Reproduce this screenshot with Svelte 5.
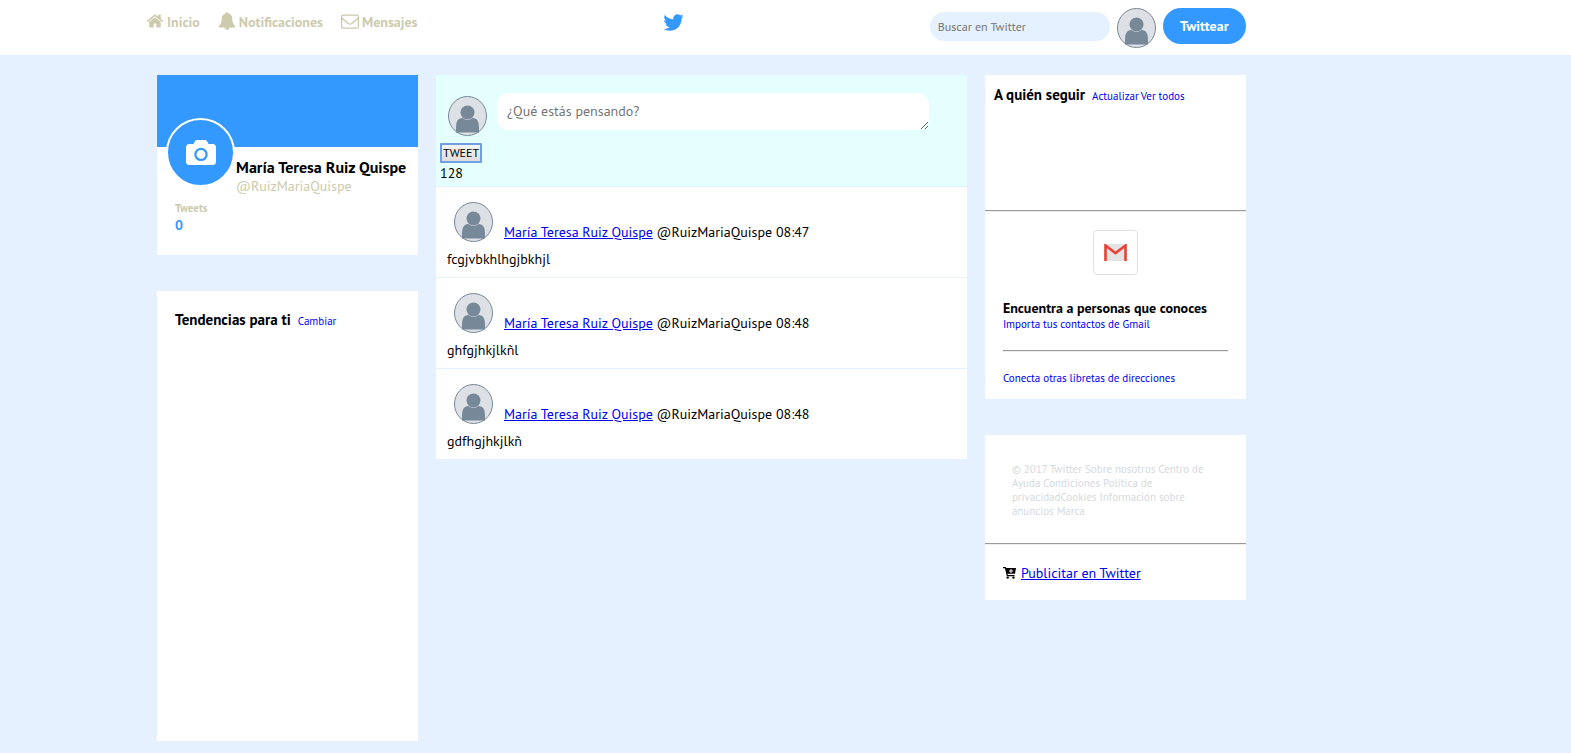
<script>
  const tweets = [
    { name: 'María Teresa Ruiz Quispe', user: '@RuizMariaQuispe', time: '08:47', text: 'fcgjvbkhlhgjbkhjl' },
    { name: 'María Teresa Ruiz Quispe', user: '@RuizMariaQuispe', time: '08:48', text: 'ghfgjhkjlkñl' },
    { name: 'María Teresa Ruiz Quispe', user: '@RuizMariaQuispe', time: '08:48', text: 'gdfhgjhkjlkñ' }
  ];
  let search = $state('');
  let draft = $state('');
</script>

{#snippet avatar()}
  <svg class="avatar" viewBox="0 0 39 40" aria-hidden="true">
    <ellipse cx="19.500" cy="20" rx="19" ry="19.500" fill="#dde1e6" stroke="#778899" />
    <path d="M8 36.500V31Q8 22 14.500 22Q19.500 26 24.500 22Q31 22 31 31V36.500Z" fill="#778899" />
    <circle cx="19.500" cy="16.500" r="7" fill="#778899" />
  </svg>
{/snippet}

<header>
  <nav>
    <a href="#inicio">
      <svg width="18" height="18" viewBox="0 0 1792 1792" aria-hidden="true"><path d="M1472 992v480q0 26-19 45t-45 19h-384v-384h-256v384h-384q-26 0-45-19t-19-45v-480q0-1 .5-3t.5-3l575-474 575 474q1 2 1 6zm223-69l-62 74q-8 9-21 11h-3q-13 0-21-7l-692-577-692 577q-12 8-24 7-13-2-21-11l-62-74q-8-10-7-23.500t11-21.500l719-599q32-26 76-26t76 26l244 204v-195q0-14 9-23t23-9h192q14 0 23 9t9 23v408l219 182q10 8 11 21.500t-7 23.500z" /></svg>
      <span>Inicio</span>
    </a>
    <a href="#notificaciones">
      <svg width="18" height="18" viewBox="0 0 1792 1792" aria-hidden="true"><path d="M912 1696q0-16-16-16-59 0-101.500-42.500t-42.500-101.500q0-16-16-16t-16 16q0 73 51.500 124.500t124.500 51.500q16 0 16-16zm816-288q0 52-38 90t-90 38h-448q0 106-75 181t-181 75-181-75-75-181h-448q-52 0-90-38t-38-90q50-42 91-88t85-119.500 74.500-158.500 50-206 19.500-260q0-152 117-282.500t307-158.500q-8-19-8-39 0-40 28-68t68-28 68 28 28 68q0 20-8 39 190 28 307 158.500t117 282.500q0 139 19.500 260t50 206 74.500 158.500 85 119.500 91 88z" /></svg>
      <span>Notificaciones</span>
    </a>
    <a href="#mensajes">
      <svg width="18" height="18" viewBox="0 0 1792 1792" aria-hidden="true"><path fill-rule="evenodd" d="M1664 1504v-768q-32 36-69 66-268 206-426 338-51 43-83 67t-86.500 48.500-102.500 24.500h-2q-48 0-102.500-24.500t-86.500-48.500-83-67q-158-132-426-338-37-30-69-66v768q0 13 9.500 22.500t22.500 9.500h1472q13 0 22.500-9.500t9.500-22.500zm0-1051v-24.500l-.5-13-3-12.500-5.500-9-9-7.500-14-2.500h-1472q-13 0-22.500 9.500t-9.500 22.500q0 168 147 284 193 152 401 317 6 5 35 29.500t46 37.500 44.500 31.500 50.500 27.500 43 9h2q20 0 43-9t50.500-27.500 44.500-31.500 46-37.500 35-29.500q208-165 401-317 54-43 100.500-115.500t46.500-131.500zm128-37v1088q0 66-47 113t-113 47h-1472q-66 0-113-47t-47-113v-1088q0-66 47-113t113-47h1472q66 0 113 47t47 113z" /></svg>
      <span>Mensajes</span>
    </a>
  </nav>
  <svg class="bird" viewBox="0 0 1792 1792" aria-hidden="true"><path d="M1684 408q-67 98-162 167 1 14 1 42 0 130-38 259.500t-115.500 248.500-184.500 210.500-258 146-323 54.500q-271 0-496-145 35 4 78 4 225 0 401-138-105-2-188-64.500t-114-159.500q33 5 61 5 43 0 85-11-112-23-185.500-111.500t-73.500-205.500v-4q68 38 146 41-66-44-105-115t-39-154q0-88 44-163 121 149 294.500 238.500t371.500 99.500q-8-38-8-74 0-134 94.500-228.500t228.500-94.500q140 0 236 102 109-21 205-78-37 115-142 178 93-10 186-50z" /></svg>
  <div class="actions">
    <input type="text" placeholder="Buscar en Twitter" aria-label="Buscar en Twitter" bind:value={search} />
    {@render avatar()}
    <button class="primary" type="button">Twittear</button>
  </div>
</header>

<main>
  <aside>
    <section class="card profile">
      <div class="cover"></div>
      <div class="identity">
        <div class="photo">
          <svg width="30" height="26" viewBox="0 0 30 26" aria-hidden="true">
            <path fill="#fff" fill-rule="evenodd" d="M3.500 4h4l1-2Q9.200 0 11 0h8q1.800 0 2.500 2l1 2h4q3.500 0 3.500 3.500V21.500q0 3.500-3.500 3.500h-23q-3.500 0-3.500-3.500V7.500q0-3.500 3.500-3.500zM15 7.700a6.700 6.700 0 1 0 0 13.400a6.700 6.700 0 1 0 0-13.400zm0 2.200a4.500 4.500 0 1 1 0 9a4.500 4.500 0 1 1 0-9z" />
          </svg>
        </div>
        <div class="names">
          <h1>María Teresa Ruiz Quispe</h1>
          <p>@RuizMariaQuispe</p>
        </div>
      </div>
      <div class="stats">
        <span>Tweets</span>
        <strong>0</strong>
      </div>
    </section>
    <section class="card trends">
      <div class="title"><h2>Tendencias para ti</h2><a class="small" href="#cambiar">Cambiar</a></div>
    </section>
  </aside>

  <div class="feed">
    <form class="compose" onsubmit={(e) => e.preventDefault()}>
      <div class="write">
        {@render avatar()}
        <textarea placeholder="¿Qué estás pensando?" aria-label="Nuevo tweet" bind:value={draft}></textarea>
      </div>
      <button class="send" type="submit">TWEET</button>
      <span class="count">128</span>
    </form>
    {#each tweets as tweet}
      <article>
        <div class="author">
          {@render avatar()}
          <p><a href="#perfil">{tweet.name}</a> {tweet.user} {tweet.time}</p>
        </div>
        <p class="message">{tweet.text}</p>
      </article>
    {/each}
  </div>

  <aside>
    <section class="card">
      <div class="follow title">
        <h2>A quién seguir</h2>
        <div class="options"><a class="small" href="#actualizar">Actualizar</a><a class="small" href="#todos">Ver todos</a></div>
      </div>
      <hr />
      <div class="contacts">
        <div class="gmail">
          <svg width="23" height="17" viewBox="0 0 23 17" aria-hidden="true">
            <rect width="23" height="17" rx="1" fill="#e3e3e3" />
            <path d="M1.500 17V1.500L11.500 9L21.500 1.500V17" fill="none" stroke="#ea4335" stroke-width="2.600" />
          </svg>
        </div>
        <h3>Encuentra a personas que conoces</h3>
        <a class="small" href="#gmail">Importa tus contactos de Gmail</a>
        <hr />
        <a class="small" href="#libretas">Conecta otras libretas de direcciones</a>
      </div>
    </section>
    <section class="card">
      <p class="legal">© 2017 Twitter Sobre nosotros Centro de Ayuda Condiciones Política de privacidadCookies Información sobre anuncios Marca</p>
      <hr />
      <div class="ads">
        <svg width="13" height="12" viewBox="0 0 13 12" aria-hidden="true">
          <path d="M0 .6H2.400L4.300 8.600H11.500" fill="none" stroke="#000" stroke-width="1.200" />
          <path d="M2.700 1H13L12 6.800H4Z" />
          <path d="M8 2v4M6 4h4" stroke="#fff" />
          <circle cx="4.700" cy="10.600" r="1.200" /><circle cx="10.500" cy="10.600" r="1.200" />
        </svg>
        <a href="#publicitar">Publicitar en Twitter</a>
      </div>
    </section>
  </aside>
</main>

<style>
  :global(body) {
    background: #e5f1ff;
    color: #000;
    font-family: "PT Sans", "Noto Sans", sans-serif;
    font-size: 14px;
    line-height: 18px;
  }
  h1, h2, h3, p { margin: 0; }
  h1 { font-size: 16px; line-height: 20px; }
  h2 { font-size: 15px; line-height: 20px; }
  a { color: #00e; }
  svg { display: block; flex: none; }
  button, input, textarea { font-family: inherit; box-sizing: border-box; }
  hr { margin: 0; border: 0; border-top: 1px solid #999; border-bottom: 1px solid #eee; }
  .small { font-size: 11px; line-height: 14px; text-decoration: none; }
  .avatar { width: 39px; height: 40px; }

  header {
    display: flex;
    justify-content: space-between;
    background: #fff;
    box-sizing: border-box;
    min-height: 55px;
    padding: 8px 20.7% 7px calc(10% - 11px);
  }
  nav { display: flex; gap: 18px; padding-top: 4px; align-items: flex-start; }
  nav a { display: flex; gap: 3px; color: #cccbae; font-weight: 700; text-decoration: none; }
  nav svg { fill: currentColor; }
  nav span { padding-top: 1px; }
  .bird { width: 23px; height: 23px; margin-top: 3px; fill: #39f; }
  .actions { display: flex; gap: 7px; align-items: flex-start; }
  .actions input {
    width: 180px; height: 29px; margin-top: 4px; padding: 0 8px;
    border: 0; border-radius: 15px; background: #e5f1ff; font-size: 12px;
  }
  input::placeholder, textarea::placeholder { color: #757575; }
  .primary {
    height: 36px; width: 83px; padding: 0; border: 0; border-radius: 18px;
    background: #39f; color: #fff; font-size: 14px; font-weight: 700;
  }

  main {
    display: grid;
    grid-template-columns: 261fr 531fr 261fr;
    gap: 18px;
    align-items: start;
    padding: 20px 20.7% 12px 10%;
  }
  aside { display: grid; gap: 36px; min-width: 0; }
  .card { background: #fff; }
  .cover { height: 72px; background: #39f; }
  .identity { display: flex; padding-left: 9px; gap: 1px; }
  .photo {
    display: flex; align-items: center; justify-content: center; flex: none;
    box-sizing: border-box; width: 69px; height: 69px; margin-top: -29px;
    border: 2px solid #fff; border-radius: 50%; background: #39f;
  }
  .names { padding-top: 10px; white-space: nowrap; }
  .names p { color: #cccbae; }
  .stats { display: grid; margin-top: -8px; padding: 13px 18px 21px; color: #cccbae; font-size: 11px; line-height: 16px; font-weight: 700; }
  .stats strong { color: #39f; font-size: 14px; line-height: 18px; }
  .title { display: flex; align-items: baseline; gap: 7px; }
  .trends { box-sizing: border-box; min-height: 450px; padding: 19px 18px; }
  .follow { box-sizing: border-box; min-height: 135px; padding: 10px 9px; }
  .options { display: flex; gap: 2px; }

  .feed { display: grid; gap: 1px; min-width: 0; }
  .compose { background: #e5ffff; padding: 18px 4px 4px; display: grid; justify-items: start; }
  .write { display: flex; gap: 10px; padding-left: 8px; width: 100%; box-sizing: border-box; }
  .write .avatar { margin-top: 3px; }
  textarea {
    display: block; width: 84%; height: 37px; padding: 9px 10px; border: 0; border-radius: 12px;
    font-size: 14px; line-height: 18px; resize: both; overflow: auto;
  }
  .send {
    height: 20px; margin-top: 7px; padding: 0 1px; border: 2px solid #6f9fe0; border-radius: 1px;
    background: linear-gradient(#f4f4f4, #ddd); color: #000; font-size: 12px; line-height: 16px;
  }
  .count { padding-top: 1px; }
  article { background: #fff; padding: 15px 11px 9px; }
  .author { display: flex; align-items: flex-end; gap: 11px; padding-left: 7px; }
  .author p { padding-bottom: 1px; }
  .message { padding-top: 8px; }

  .contacts { display: flex; flex-direction: column; padding: 18px 18px 14px; }
  .gmail {
    display: flex; align-items: center; justify-content: center; align-self: center;
    box-sizing: border-box; width: 45px; height: 45px; border: 1px solid #dde1e6; border-radius: 4px;
  }
  h3 { margin-top: 24px; font-size: 14px; line-height: 18px; white-space: nowrap; }
  .contacts hr { margin: 19px 0; }
  .legal { padding: 27px 27px 25px; color: #d5dade; font-size: 11px; line-height: 14px; }
  .ads { display: flex; align-items: center; gap: 5px; padding: 19px 18px 18px; }
</style>
